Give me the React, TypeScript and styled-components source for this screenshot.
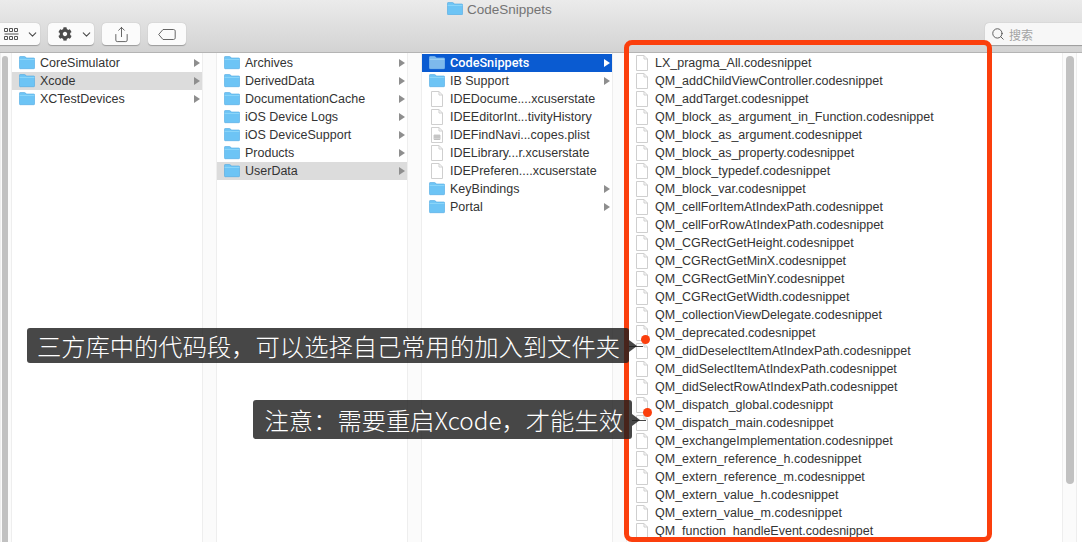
import React from "react";
import styled, { createGlobalStyle } from "styled-components";
import { ChevronDown, Search, Share } from "lucide-react";
import { FaCog } from "react-icons/fa";

const GlobalStyle = createGlobalStyle`
  html, body {
    margin: 0;
    padding: 0;
    background: #fff;
  }
  body {
    font-family: "Liberation Sans", "Noto Sans CJK SC", sans-serif;
  }
`;

const Window = styled.div`
  position: relative;
  width: 1082px;
  height: 542px;
  overflow: hidden;
  display: flex;
  flex-direction: column;
  background: #fff;
`;

const Toolbar = styled.div`
  height: 52px;
  flex: none;
  border-bottom: 1px solid #b4b4b4;
  background: linear-gradient(#ebebeb, #d3d3d3);
  display: flex;
  flex-direction: column;
`;

const TitleRow = styled.div`
  height: 23px;
  padding: 2px 0 0 447px;
  box-sizing: border-box;
  display: flex;
  align-items: flex-start;
  gap: 4px;
  font-size: 13.5px;
  line-height: 15px;
  color: #747474;
`;

const ButtonRow = styled.div`
  display: flex;
  align-items: flex-start;
  gap: 8px;
  margin-left: -8px;
`;

const ToolButton = styled.div<{ $w: number; $pl?: number; $gap?: number }>`
  width: ${(p) => p.$w}px;
  height: 22px;
  box-sizing: border-box;
  padding-left: ${(p) => p.$pl ?? 0}px;
  background: #fbfbfb;
  border-radius: 4px;
  box-shadow: 0 0.5px 1px rgba(0, 0, 0, 0.28);
  display: flex;
  align-items: center;
  justify-content: ${(p) => (p.$pl ? "flex-start" : "center")};
  gap: ${(p) => p.$gap ?? 0}px;
  color: #4b4b4b;
`;

const SearchBox = styled.div`
  margin-left: auto;
  margin-right: -8px;
  width: 105px;
  height: 22px;
  box-sizing: border-box;
  padding-left: 6px;
  background: #f7f7f7;
  border-radius: 4px 0 0 4px;
  box-shadow: 0 0.5px 1px rgba(0, 0, 0, 0.28);
  display: flex;
  align-items: center;
  gap: 4px;
  font-size: 12px;
  color: #a3a3a3;
  font-family: "Noto Sans CJK SC", sans-serif;
`;

const Browser = styled.div`
  flex: 1;
  min-height: 0;
  display: flex;
  overflow: hidden;
`;

const Gutter = styled.div<{ $w: number }>`
  flex: none;
  width: ${(p) => p.$w}px;
  box-sizing: border-box;
  background: #fbfbfb;
  border-left: 1px solid #eeeeee;
  border-right: 1px solid #eeeeee;
  padding-top: 3px;
`;

const Thumb = styled.div<{ $h: number; $w: number; $ml: number }>`
  width: ${(p) => p.$w}px;
  height: ${(p) => p.$h}px;
  margin-left: ${(p) => p.$ml}px;
  border-radius: 4px;
  background: #c1c1c1;
`;

const Column = styled.div<{ $w: number }>`
  flex: none;
  width: ${(p) => p.$w}px;
  padding-top: 1px;
  overflow: hidden;
`;

const Row = styled.div<{ $state?: "active" | "inactive" }>`
  height: 18px;
  display: flex;
  align-items: center;
  padding: 0 2px 0 6px;
  font-size: 12.5px;
  white-space: nowrap;
  background: ${(p) =>
    p.$state === "active" ? "#0a5bd1" : p.$state === "inactive" ? "#dcdcdc" : "transparent"};
  color: ${(p) => (p.$state === "active" ? "#fff" : "#333333")};
`;

const FileRow = styled(Row)`
  padding-left: 9px;
`;

const Name = styled.span<{ $active?: boolean }>`
  margin-left: 5px;
  margin-top: ${(p) => (p.$active ? "-1px" : "0")};
  flex: 1;
  font-family: ${(p) => (p.$active ? "Roboto, sans-serif" : "inherit")};
  font-weight: ${(p) => (p.$active ? 500 : 400)};
  font-size: ${(p) => (p.$active ? "12.7px" : "inherit")};
`;

const IconSlot = styled.span`
  width: 17px;
  flex: none;
  display: flex;
  justify-content: center;
`;

const FileName = styled.span`
  margin-left: 7px;
`;

const Arrow = styled.span<{ $light?: boolean }>`
  width: 0;
  height: 0;
  border-left: 6px solid ${(p) => (p.$light ? "#fff" : "#8e8e8e")};
  border-top: 4px solid transparent;
  border-bottom: 4px solid transparent;
`;

const RedFrame = styled.div`
  position: absolute;
  left: 624px;
  top: 40px;
  width: 368px;
  height: 502px;
  box-sizing: border-box;
  border: 5px solid #fb3f0d;
  border-radius: 8px;
  pointer-events: none;
`;

const Note = styled.div<{ $left: number; $top: number; $w: number; $h: number }>`
  position: absolute;
  left: ${(p) => p.$left}px;
  top: ${(p) => p.$top}px;
  width: ${(p) => p.$w}px;
  height: ${(p) => p.$h}px;
  box-sizing: border-box;
  border-radius: 3px;
  background: rgba(30, 30, 30, 0.82);
  color: #fff;
  font-family: "Noto Sans CJK SC", sans-serif;
  font-weight: 300;
  font-size: 24.3px;
  white-space: nowrap;
  display: flex;
  align-items: center;
  justify-content: flex-end;
  padding-right: 9px;

  &::after {
    content: "";
    position: absolute;
    left: 100%;
    top: 50%;
    margin-top: -6px;
    border-left: 8px solid rgba(30, 30, 30, 0.82);
    border-top: 6px solid transparent;
    border-bottom: 6px solid transparent;
  }

  &::before {
    content: "";
    position: absolute;
    left: 100%;
    top: 50%;
    width: 14px;
    height: 1px;
    background: rgba(30, 30, 30, 0.82);
  }
`;

const Dot = styled.div<{ $left: number; $top: number }>`
  position: absolute;
  left: ${(p) => p.$left}px;
  top: ${(p) => p.$top}px;
  width: 9px;
  height: 9px;
  border-radius: 50%;
  background: #fb3f0d;
`;

const Folder = ({ pale, size = 16 }: { pale?: boolean; size?: number }) => (
  <svg width={size} height={(size * 14) / 17} viewBox="0 0 17 14" style={{ flex: "none" }}>
    <path
      d="M1.2 0.5h4.6c.6 0 .9.2 1.2.6l.7 1h8c.6 0 .9.3.9.9v9.6c0 .6-.3.9-.9.9H1.2c-.5 0-.7-.3-.7-.9V1.4c0-.6.2-.9.7-.9z"
      fill={pale ? "#7db9ec" : "#6dc4f5"}
      stroke={pale ? "#8cc6f2" : "#4aa5e0"}
      strokeWidth="0.6"
    />
    <path d="M.6 3.6h15.8" stroke={pale ? "#a9d8f6" : "#9bdcfa"} strokeWidth="0.8" />
  </svg>
);

const FileIcon = ({ table }: { table?: boolean }) => (
  <svg width="12" height="16" viewBox="0 0 12 16" style={{ flex: "none" }}>
    <path d="M.5.5h7.5l3.5 3.5v11.5H.5z" fill="#fff" stroke="#cfcfcf" />
    <path d="M8 .5V4h3.5" fill="none" stroke="#cfcfcf" />
    {table && <path d="M3 8h6v4.5H3zM3 10h6M5 8v4.5M7 8v4.5" fill="#e4e4e4" stroke="#a8a8a8" strokeWidth="0.6" />}
  </svg>
);

const GridIcon = () => (
  <svg width="15" height="13" viewBox="0 0 15 13" fill="none" stroke="#555" strokeWidth="1">
    <path d="M.5.5h3v3h-3zM5.5.5h3v3h-3zM10.5.5h3v3h-3z" />
    <path d="M.5 6h14" />
    <path d="M.5 8.5h3v3h-3zM5.5 8.5h3v3h-3zM10.5 8.5h3v3h-3z" />
  </svg>
);

const TagIcon = () => (
  <svg width="18" height="11" viewBox="0 0 18 11" fill="none" stroke="#555" strokeWidth="0.9">
    <path d="M5 .5h10.5c1 0 1.7.7 1.7 1.7v6.6c0 1-.7 1.7-1.7 1.7H5L.7 5.5z" />
  </svg>
);

type Item = { name: string; folder?: boolean; plist?: boolean; state?: "active" | "inactive" };

const col1: Item[] = [
  { name: "CoreSimulator", folder: true },
  { name: "Xcode", folder: true, state: "inactive" },
  { name: "XCTestDevices", folder: true },
];

const col2: Item[] = [
  { name: "Archives", folder: true },
  { name: "DerivedData", folder: true },
  { name: "DocumentationCache", folder: true },
  { name: "iOS Device Logs", folder: true },
  { name: "iOS DeviceSupport", folder: true },
  { name: "Products", folder: true },
  { name: "UserData", folder: true, state: "inactive" },
];

const col3: Item[] = [
  { name: "CodeSnippets", folder: true, state: "active" },
  { name: "IB Support", folder: true },
  { name: "IDEDocume....xcuserstate" },
  { name: "IDEEditorInt...tivityHistory" },
  { name: "IDEFindNavi...copes.plist", plist: true },
  { name: "IDELibrary...r.xcuserstate" },
  { name: "IDEPreferen....xcuserstate" },
  { name: "KeyBindings", folder: true },
  { name: "Portal", folder: true },
];

const snippets = [
  "LX_pragma_All.codesnippet",
  "QM_addChildViewController.codesnippet",
  "QM_addTarget.codesnippet",
  "QM_block_as_argument_in_Function.codesnippet",
  "QM_block_as_argument.codesnippet",
  "QM_block_as_property.codesnippet",
  "QM_block_typedef.codesnippet",
  "QM_block_var.codesnippet",
  "QM_cellForItemAtIndexPath.codesnippet",
  "QM_cellForRowAtIndexPath.codesnippet",
  "QM_CGRectGetHeight.codesnippet",
  "QM_CGRectGetMinX.codesnippet",
  "QM_CGRectGetMinY.codesnippet",
  "QM_CGRectGetWidth.codesnippet",
  "QM_collectionViewDelegate.codesnippet",
  "QM_deprecated.codesnippet",
  "QM_didDeselectItemAtIndexPath.codesnippet",
  "QM_didSelectItemAtIndexPath.codesnippet",
  "QM_didSelectRowAtIndexPath.codesnippet",
  "QM_dispatch_global.codesnippt",
  "QM_dispatch_main.codesnippet",
  "QM_exchangeImplementation.codesnippet",
  "QM_extern_reference_h.codesnippet",
  "QM_extern_reference_m.codesnippet",
  "QM_extern_value_h.codesnippet",
  "QM_extern_value_m.codesnippet",
  "QM_function_handleEvent.codesnippet",
];

const ItemList = ({ items }: { items: Item[] }) => (
  <>
    {items.map((item) => (
      <Row key={item.name} $state={item.state}>
        <IconSlot>
          {item.folder ? <Folder pale={item.state === "active"} /> : <FileIcon table={item.plist} />}
        </IconSlot>
        <Name $active={item.state === "active"}>{item.name}</Name>
        {item.folder && <Arrow $light={item.state === "active"} />}
      </Row>
    ))}
  </>
);

export default function App() {
  return (
    <>
      <GlobalStyle />
      <Window>
        <Toolbar>
          <TitleRow>
            <Folder />
            <span>CodeSnippets</span>
          </TitleRow>
          <ButtonRow>
            <ToolButton $w={48} $pl={12} $gap={7}>
              <GridIcon />
              <ChevronDown size={13} strokeWidth={2} />
            </ToolButton>
            <ToolButton $w={46} $pl={10} $gap={8}>
              <FaCog size={14} />
              <ChevronDown size={13} strokeWidth={2} />
            </ToolButton>
            <ToolButton $w={38}>
              <Share size={17} strokeWidth={1.2} />
            </ToolButton>
            <ToolButton $w={38}>
              <TagIcon />
            </ToolButton>
            <SearchBox>
              <Search size={14} strokeWidth={1.6} color="#555" />
              <span>搜索</span>
            </SearchBox>
          </ButtonRow>
        </Toolbar>
        <Browser>
          <Gutter $w={12}>
            <Thumb $h={500} $w={6} $ml={1} />
          </Gutter>
          <Column $w={190}>
            <ItemList items={col1} />
          </Column>
          <Gutter $w={15} />
          <Column $w={190}>
            <ItemList items={col2} />
          </Column>
          <Gutter $w={15} />
          <Column $w={190}>
            <ItemList items={col3} />
          </Column>
          <Gutter $w={15} />
          <Column $w={435}>
            {snippets.map((name) => (
              <FileRow key={name}>
                <FileIcon />
                <FileName>{name}</FileName>
              </FileRow>
            ))}
          </Column>
          <Gutter $w={15}>
            <Thumb $h={428} $w={8} $ml={3} />
          </Gutter>
        </Browser>
        <RedFrame />
        <Note $left={27} $top={328} $w={602} $h={35}>
          三方库中的代码段，可以选择自己常用的加入到文件夹
        </Note>
        <Dot $left={641} $top={335} />
        <Note $left={253} $top={400} $w={379} $h={39}>
          注意：需要重启Xcode，才能生效
        </Note>
        <Dot $left={643} $top={408} />
      </Window>
    </>
  );
}
